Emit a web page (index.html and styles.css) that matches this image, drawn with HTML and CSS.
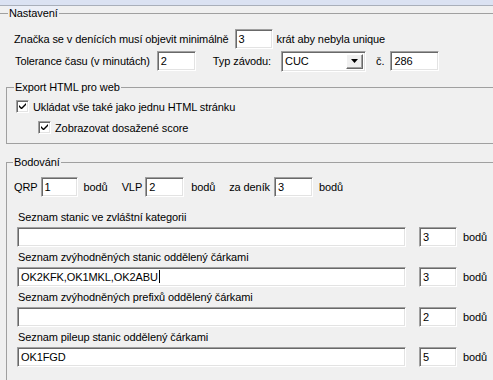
FILE: index.html
```html
<!DOCTYPE html>
<html lang="cs">
<head>
    <meta charset="UTF-8">
    <title>Nastavení</title>
    <link rel="stylesheet" href="styles.css">
</head>
<body>
    <div class="titlebar"></div>

    <fieldset class="group group-main">
        <legend>Nastavení</legend>

        <div class="row row-first">
            <span class="txt">Značka se v denících musí objevit minimálně</span>
            <div class="field w-38 ml-6">3</div>
            <span class="txt ml-4">krát aby nebyla unique</span>
        </div>

        <div class="row row-second">
            <span class="txt pl-1">Tolerance času (v minutách)</span>
            <div class="field w-39 ml-7">2</div>
            <span class="txt ml-17">Typ závodu:</span>
            <div class="select ml-10">
                <span class="select-value">CUC</span>
                <span class="select-btn">
                    <svg width="7" height="4" viewBox="0 0 7 4"><path d="M0 0h7L3.5 4z" fill="#000"/></svg>
                </span>
            </div>
            <span class="txt ml-10">č.</span>
            <div class="field w-49 ml-6">286</div>
        </div>

        <fieldset class="group group-sub group-export">
            <legend>Export HTML pro web</legend>
            <div class="check">
                <span class="check-box">
                    <svg width="7" height="7" viewBox="0 0 7 7"><path d="M0 2v2l2 2h1l4-4V0L2.5 4.5z" fill="#000"/></svg>
                </span>
                Ukládat vše také jako jednu HTML stránku
            </div>
            <div class="check check-child">
                <span class="check-box">
                    <svg width="7" height="7" viewBox="0 0 7 7"><path d="M0 2v2l2 2h1l4-4V0L2.5 4.5z" fill="#000"/></svg>
                </span>
                Zobrazovat dosažené score
            </div>
        </fieldset>

        <fieldset class="group group-sub group-points">
            <legend>Bodování</legend>

            <div class="row">
                <span class="txt">QRP</span>
                <div class="field w-37 ml-3">1</div>
                <span class="txt ml-6">bodů</span>
                <span class="txt ml-14">VLP</span>
                <div class="field w-39 ml-3">2</div>
                <span class="txt ml-7">bodů</span>
                <span class="txt ml-14">za deník</span>
                <div class="field w-39 ml-4">3</div>
                <span class="txt ml-6">bodů</span>
            </div>

            <div class="list list-first">
                <div class="list-label">Seznam stanic ve zvláštní kategorii</div>
                <div class="row list-row">
                    <div class="field wide"></div>
                    <div class="field w-38 ml-13">3</div>
                    <span class="txt ml-6">bodů</span>
                </div>
            </div>

            <div class="list">
                <div class="list-label">Seznam zvýhodněných stanic oddělený čárkami</div>
                <div class="row list-row">
                    <div class="field wide">OK2KFK,OK1MKL,OK2ABU<span class="caret"></span></div>
                    <div class="field w-38 ml-13">3</div>
                    <span class="txt ml-6">bodů</span>
                </div>
            </div>

            <div class="list">
                <div class="list-label">Seznam zvýhodněných prefixů oddělený čárkami</div>
                <div class="row list-row">
                    <div class="field wide"></div>
                    <div class="field w-38 ml-13">2</div>
                    <span class="txt ml-6">bodů</span>
                </div>
            </div>

            <div class="list">
                <div class="list-label">Seznam pileup stanic oddělený čárkami</div>
                <div class="row list-row">
                    <div class="field wide">OK1FGD</div>
                    <div class="field w-38 ml-13">5</div>
                    <span class="txt ml-6">bodů</span>
                </div>
            </div>
        </fieldset>
    </fieldset>
</body>
</html>
```

FILE: styles.css
```css
* {
    box-sizing: border-box;
}

body {
    margin: 0;
    background-color: #f0f0f0;
    font-family: "Liberation Sans", Arial, sans-serif;
    font-size: 11px;
    letter-spacing: -0.1px;
    color: #000;
    overflow: hidden;
}

.titlebar {
    height: 6px;
    background-color: #dbe2f2;
    border-bottom: 1px solid #a9afba;
}

/* group boxes */
.group {
    border: 1px solid #a0a0a0;
    margin: 0;
    min-width: 0;
}

.group legend {
    padding: 0 1px;
    line-height: 14px;
}

.group-main {
    margin: 0 -40px 0 -20px;
    padding: 9px 0 0 27px;
    border-bottom: none;
}

.group-main > legend {
    background: linear-gradient(#eceff7 0 7px, #f0f0f0 7px);
}

.group-sub {
    margin-right: -20px;
    margin-left: -2px;
}

.group-export {
    margin-top: 9px;
    padding: 6px 0 9px 7px;
}

.group-points {
    margin-top: 11px;
    padding: 8px 0 40px 7px;
    border-bottom: none;
}

.group-points > legend {
    margin-left: -1px;
}

/* rows */
.row {
    display: flex;
    align-items: center;
    height: 20px;
    white-space: nowrap;
}

.row-first {
    margin-left: 6px;
}

.row-second {
    margin-left: 6px;
    margin-top: 2px;
}

.pl-1 { padding-left: 1px; }
.ml-3 { margin-left: 3px; }
.ml-4 { margin-left: 4px; }
.ml-6 { margin-left: 6px; }
.ml-7 { margin-left: 7px; }
.ml-10 { margin-left: 10px; }
.ml-13 { margin-left: 13px; }
.ml-14 { margin-left: 14px; }
.ml-17 { margin-left: 17px; }

.w-37 { width: 37px; }
.w-38 { width: 38px; }
.w-39 { width: 39px; }
.w-49 { width: 49px; }

/* sunken text field */
.field {
    height: 20px;
    background-color: #fff;
    border: 1px solid;
    border-color: #a0a0a0 #fff #fff #a0a0a0;
    box-shadow: inset 1px 1px #696969, inset -1px -1px #e3e3e3;
    padding: 2px 0 0 3px;
    line-height: 14px;
    white-space: nowrap;
    overflow: hidden;
    flex: none;
}

.field.wide {
    width: 389px;
}

.caret {
    display: inline-block;
    width: 1px;
    height: 13px;
    background-color: #000;
    vertical-align: -2px;
    margin-left: 1px;
}

/* combo box */
.select {
    display: flex;
    width: 85px;
    height: 21px;
    background-color: #fff;
    border: 1px solid;
    border-color: #a0a0a0 #fff #fff #a0a0a0;
    box-shadow: inset 1px 1px #696969, inset -1px -1px #e3e3e3;
    padding: 2px 2px 2px 3px;
    flex: none;
}

.select-value {
    flex: 1;
    line-height: 15px;
}

.select-btn {
    width: 17px;
    display: flex;
    align-items: center;
    justify-content: center;
    background-color: #f0f0f0;
    border: 1px solid;
    border-color: #fff #696969 #696969 #fff;
    box-shadow: inset -1px -1px #a0a0a0;
}

/* check boxes */
.check {
    display: flex;
    align-items: center;
    height: 13px;
    margin-left: 2px;
    white-space: nowrap;
}

.check-child {
    margin-top: 8px;
    margin-left: 24px;
}

.check-box {
    width: 13px;
    height: 13px;
    margin-right: 4px;
    background-color: #fff;
    border: 1px solid;
    border-color: #a0a0a0 #fff #fff #a0a0a0;
    box-shadow: inset 1px 1px #696969, inset -1px -1px #e3e3e3;
    display: flex;
    align-items: center;
    justify-content: center;
}

/* point lists */
.list {
    margin-top: 3px;
}

.list-first {
    margin-top: 13px;
}

.list-label {
    line-height: 14px;
    padding-left: 4px;
    white-space: nowrap;
}

.list-row {
    margin-top: 3px;
    margin-left: 3px;
}
```
